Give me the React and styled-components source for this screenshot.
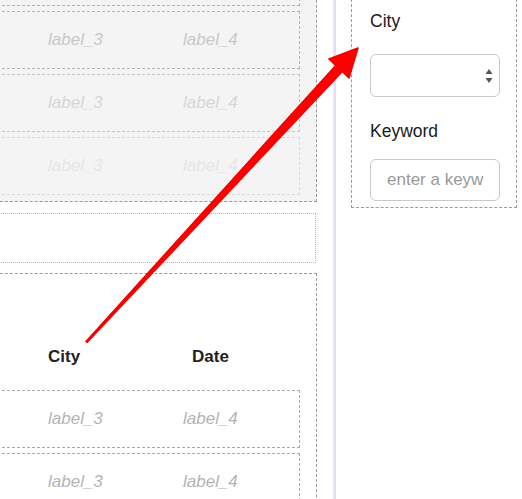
import React from "react";
import styled, { createGlobalStyle } from "styled-components";

const GlobalStyle = createGlobalStyle`
  html, body {
    margin: 0;
    padding: 0;
    background: #fff;
    overflow: hidden;
  }
  body {
    font-family: "Liberation Sans", Arial, Helvetica, sans-serif;
    font-size: 17px;
  }
`;

const Page = styled.div`
  position: relative;
  display: flex;
  width: 522px;
  height: 499px;
  overflow: hidden;
`;

const LeftPane = styled.div`
  width: 333px;
  flex-shrink: 0;
  overflow: hidden;
`;

const LeftInner = styled.div`
  display: flex;
  flex-direction: column;
  width: 377px;
  margin-left: -60px;
  margin-top: -60px;
`;

const DragZone = styled.div`
  display: flex;
  flex-direction: column;
  gap: 5px;
  padding: 7px 16px 6px;
  background: #f4f4f4;
  border: 1px dashed #9a9a9a;
`;

const Row = styled.div`
  box-sizing: border-box;
  height: 58px;
  display: grid;
  grid-template-columns: 135px 1fr;
  align-items: center;
  padding-left: 90px;
  line-height: 20px;
  font-style: italic;
  border: 1px dashed ${(p) => p.$border || "#aaa"};
  color: ${(p) => p.$color || "#b4b4b4"};
`;

const DropSlot = styled.div`
  box-sizing: border-box;
  height: 50px;
  margin: 11px 1px 0 0;
  border: 1px dotted #b5b5b5;
`;

const TableBox = styled.div`
  display: flex;
  flex-direction: column;
  gap: 5px;
  margin-top: 10px;
  padding: 73px 16px 0;
  border: 1px dashed #9a9a9a;
  height: 300px;
`;

const HeaderRow = styled.div`
  display: grid;
  grid-template-columns: 144px 1fr;
  padding-left: 91px;
  margin-bottom: 18px;
  line-height: 20px;
  font-weight: 700;
  color: #222;
`;

const Divider = styled.div`
  width: 3px;
  flex-shrink: 0;
  background: #dfdff9;
  border-left: 1px solid #e8e8fb;
  box-sizing: border-box;
`;

const RightPane = styled.div`
  margin-left: 15px;
`;

const Panel = styled.div`
  box-sizing: border-box;
  width: 166px;
  margin-top: -1px;
  padding: 11px 17px 6px 18px;
  border: 1px dashed #9a9a9a;
  display: flex;
  flex-direction: column;
`;

const FieldLabel = styled.label`
  line-height: 20px;
  color: #1a1a1a;
  font-size: 17.5px;
  margin-top: ${(p) => p.$top || 0}px;
`;

const SelectBox = styled.div`
  box-sizing: border-box;
  width: 130px;
  height: 43px;
  margin-top: 23px;
  border: 1px solid #c9c9c9;
  border-radius: 6px;
  background: #fff;
  display: flex;
  align-items: center;
  justify-content: flex-end;
  padding-right: 6px;
`;

const TextBox = styled.div`
  box-sizing: border-box;
  width: 130px;
  height: 42px;
  margin-top: 18px;
  border: 1px solid #c9c9c9;
  border-radius: 6px;
  padding: 0 15px 0 16px;
  display: flex;
  align-items: center;
  overflow: hidden;
  white-space: nowrap;
  color: #9a9a9a;
`;

const Placeholder = styled.span`
  display: block;
  width: 100%;
  overflow: hidden;
  line-height: 20px;
`;

const Overlay = styled.svg`
  position: absolute;
  left: 0;
  top: 0;
  pointer-events: none;
`;

// first ghost row sits above the fold, only its bottom edge shows
const ghostRows = [
  { border: "#b0b0b0", color: "#c4c4c4", empty: true },
  { border: "#b4b4b4", color: "#c8c8c8" },
  { border: "#c6c6c6", color: "#d6d6d6" },
  { border: "#dadada", color: "#e6e6e6" },
];

const tableRows = [1, 2];

function Stepper() {
  return (
    <svg width="8" height="16" viewBox="0 0 8 16">
      <path d="M4 1 L7.5 6 L0.5 6 Z" fill="#555" />
      <path d="M0.5 10 L7.5 10 L4 15 Z" fill="#555" />
    </svg>
  );
}

export default function App() {
  return (
    <Page>
      <GlobalStyle />
      <LeftPane>
        <LeftInner>
          <DragZone>
            {ghostRows.map((r, i) => (
              <Row key={i} $border={r.border} $color={r.color}>
                {!r.empty && <span>label_3</span>}
                {!r.empty && <span>label_4</span>}
              </Row>
            ))}
          </DragZone>
          <DropSlot />
          <TableBox>
            <HeaderRow>
              <span>City</span>
              <span>Date</span>
            </HeaderRow>
            {tableRows.map((i) => (
              <Row key={i}>
                <span>label_3</span>
                <span>label_4</span>
              </Row>
            ))}
          </TableBox>
        </LeftInner>
      </LeftPane>
      <Divider />
      <RightPane>
        <Panel>
          <FieldLabel>City</FieldLabel>
          <SelectBox>
            <Stepper />
          </SelectBox>
          <FieldLabel $top={24}>Keyword</FieldLabel>
          <TextBox>
            <Placeholder>enter a keyword</Placeholder>
          </TextBox>
        </Panel>
      </RightPane>
      <Overlay width="522" height="499" viewBox="0 0 522 499">
        <path
          d="M86 341.5 L335.7 65.4 L329 59 L358 48 L349 78 L342.3 71.5 L87.2 342.3 Z"
          fill="#ff0000"
          stroke="#f00000"
          strokeWidth="1.5"
          strokeLinejoin="round"
        />
      </Overlay>
    </Page>
  );
}
